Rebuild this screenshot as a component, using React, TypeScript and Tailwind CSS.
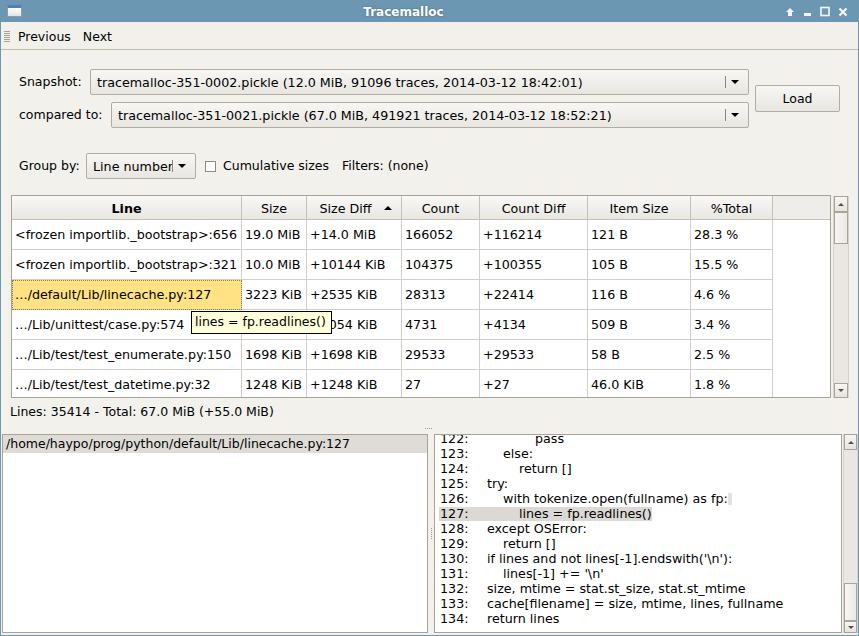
import React from "react";

const rows: string[][] = [
  ["<frozen importlib._bootstrap>:656", "19.0 MiB", "+14.0 MiB", "166052", "+116214", "121 B", "28.3 %"],
  ["<frozen importlib._bootstrap>:321", "10.0 MiB", "+10144 KiB", "104375", "+100355", "105 B", "15.5 %"],
  ["\u2026/default/Lib/linecache.py:127", "3223 KiB", "+2535 KiB", "28313", "+22414", "116 B", "4.6 %"],
  ["\u2026/Lib/unittest/case.py:574", "2188 KiB", "+2054 KiB", "4731", "+4134", "509 B", "3.4 %"],
  ["\u2026/Lib/test/test_enumerate.py:150", "1698 KiB", "+1698 KiB", "29533", "+29533", "58 B", "2.5 %"],
  ["\u2026/Lib/test/test_datetime.py:32", "1248 KiB", "+1248 KiB", "27", "+27", "46.0 KiB", "1.8 %"],
];

const widths = ["w-[230px]", "w-[65px]", "w-[95px]", "w-[78px]", "w-[108px]", "w-[103px]", "w-[82px]"];
const headers = ["Line", "Size", "Size Diff", "Count", "Count Diff", "Item Size", "%Total"];

const code: [string, number, string][] = [
  ["122:", 3, "pass"],
  ["123:", 1, "else:"],
  ["124:", 2, "return []"],
  ["125:", 0, "try:"],
  ["126:", 1, "with tokenize.open(fullname) as fp:"],
  ["127:", 2, "lines = fp.readlines()"],
  ["128:", 0, "except OSError:"],
  ["129:", 1, "return []"],
  ["130:", 0, "if lines and not lines[-1].endswith('\\n'):"],
  ["131:", 1, "lines[-1] += '\\n'"],
  ["132:", 0, "size, mtime = stat.st_size, stat.st_mtime"],
  ["133:", 0, "cache[filename] = size, mtime, lines, fullname"],
  ["134:", 0, "return lines"],
];

const indents = ["pl-[0px]", "pl-[16px]", "pl-[32px]", "pl-[48px]"];

function DownTri() {
  return <span className="w-0 h-0 border-l-[4px] border-r-[4px] border-t-[4px] border-l-transparent border-r-transparent border-t-black" />;
}

function Combo({ text, className }: { text: string; className: string }) {
  return (
    <div className={`flex items-center h-[26px] rounded-[2px] border border-[#b3ac9f] bg-linear-to-b from-[#f8f7f4] to-[#e8e6e0] ${className}`}>
      <span className="flex-1 overflow-hidden whitespace-nowrap pl-[6px] pt-px text-[12.7px]">{text}</span>
      <span className="w-px h-[12px] bg-[#8c867b]" />
      <span className="ml-[5px] mr-[9px] flex items-center">
        <DownTri />
      </span>
    </div>
  );
}

function ScrollBtn({ up, className }: { up: boolean; className?: string }) {
  return (
    <div className={`flex items-center justify-center border border-[#aaa498] bg-linear-to-b from-[#f7f6f3] to-[#e6e4df] ${className ?? ""}`}>
      {up ? (
        <span className="w-0 h-0 border-l-[3px] border-r-[3px] border-b-[3px] border-l-transparent border-r-transparent border-b-[#505050]" />
      ) : (
        <span className="w-0 h-0 border-l-[3px] border-r-[3px] border-t-[3px] border-l-transparent border-r-transparent border-t-[#505050]" />
      )}
    </div>
  );
}

export default function App() {
  return (
    <div className="relative w-[859px] h-[636px] bg-[#6c97b2] flex flex-col font-['DejaVu_Sans','Liberation_Sans',sans-serif] text-[12.5px] text-black overflow-hidden">
      {/* Title bar */}
      <div className="h-[22px] flex items-center shrink-0">
        <div className="w-[22px] h-full flex items-center">
          <div className="ml-[7px] w-[15px] h-[12px] border border-[#8e9aa6] border-t-[3px] border-t-[#4d7fc2] bg-linear-to-b from-[#ffffff] to-[#dfe3e8]" />
        </div>
        <div className="flex-1 text-center text-white font-bold text-[12px] pt-[2px] [text-shadow:0_0_2px_#3e6076]">Tracemalloc</div>
        <div className="w-[74px] h-full flex items-center">
          <svg width="74" height="22" viewBox="0 0 74 22">
            <path d="M5 8 L9 12 L7 12 L7 16 L3 16 L3 12 L1 12 Z" fill="#f4f7fa" />
            <rect x="19" y="13" width="7" height="3" fill="#f4f7fa" />
            <rect x="36" y="7.5" width="8" height="8" fill="none" stroke="#f4f7fa" strokeWidth="1.6" />
            <path d="M54.5 8.5 L61.5 15.5 M61.5 8.5 L54.5 15.5" stroke="#f4f7fa" strokeWidth="2.2" />
          </svg>
        </div>
      </div>

      {/* Body */}
      <div className="flex-1 mx-px mb-px bg-[#f2f1ec] flex flex-col">
        {/* Menubar */}
        <div className="h-[28px] shrink-0 flex items-center pt-[3px] border-b border-[#c4bcab] bg-[#f2f0eb]">
          <svg width="8" height="14" className="ml-[3px]" viewBox="0 0 8 14">
            {[1, 3, 5, 7, 9, 11].map((y) => (
              <line key={y} x1="0" y1={y + 0.5} x2="6" y2={y + 0.5} stroke="#a8a294" strokeWidth="1" />
            ))}
          </svg>
          <span className="ml-[6px]">Previous</span>
          <span className="ml-[12px]">Next</span>
        </div>

        {/* Snapshot section */}
        <div className="flex items-center pl-[18px] mt-[19px] shrink-0">
          <div className="w-[730px] flex flex-col gap-[7px]">
            <div className="flex items-center">
              <span className="w-[71px] pt-px">Snapshot:</span>
              <Combo className="flex-1" text="tracemalloc-351-0002.pickle (12.0 MiB, 91096 traces, 2014-03-12 18:42:01)" />
            </div>
            <div className="flex items-center">
              <span className="w-[92px] pt-px">compared to:</span>
              <Combo className="flex-1" text="tracemalloc-351-0021.pickle (67.0 MiB, 491921 traces, 2014-03-12 18:52:21)" />
            </div>
          </div>
          <div className="ml-[6px] w-[85px] h-[27px] flex items-center justify-center pt-px rounded-[2px] border border-[#b3ac9f] bg-linear-to-b from-[#f8f7f4] to-[#e8e6e0]">
            Load
          </div>
        </div>

        {/* Group by row */}
        <div className="flex items-center pl-[18px] mt-[25px] h-[26px] shrink-0">
          <span className="w-[67px] pt-px">Group by:</span>
          <Combo className="w-[110px]" text="Line number" />
          <span className="ml-[9px] w-[11px] h-[11px] border border-[#8f897e] bg-white" />
          <span className="ml-[7px] w-[119px] pt-px">Cumulative sizes</span>
          <span className="pt-px">Filters: (none)</span>
        </div>

        {/* Table */}
        <div className="flex mt-[16px] ml-[10px] shrink-0 text-[12.7px]">
          <div className="w-[820px] h-[203px] border border-[#a9a397] bg-white overflow-hidden">
            <div className="flex h-[24px] border-b border-[#c5c0b6] bg-[#efede9]">
              {headers.map((h, i) => (
                <div
                  key={h}
                  className={`${widths[i]} h-full flex items-center pt-[3px] border-r border-[#c5c0b6] bg-linear-to-b from-[#f9f8f6] to-[#e9e7e2] ${i === 0 ? "font-bold" : ""}`}
                >
                  <span className="flex-1 text-center">{h}</span>
                  {i === 2 && (
                    <span className="mr-[9px] mb-[3px] w-0 h-0 border-l-[4px] border-r-[4px] border-b-[4px] border-l-transparent border-r-transparent border-b-black" />
                  )}
                </div>
              ))}
            </div>
            {rows.map((r, ri) => (
              <div key={ri} className="flex h-[30px]">
                {r.map((c, ci) => (
                  <div
                    key={ci}
                    className={`${widths[ci]} h-full flex items-center pl-[3px] whitespace-nowrap overflow-hidden border-r border-b border-[#d2cfca] ${
                      ri === 2 && ci === 0 ? "bg-[#fee283] outline-1 outline-dotted outline-[#8d7d43] outline-offset-[-1px]" : ""
                    }`}
                  >
                    {c}
                  </div>
                ))}
              </div>
            ))}
          </div>
          <div className="ml-[2px] mt-px w-[16px] h-[202px] flex flex-col bg-[#e9e7e2] border-x border-[#d6d2cb]">
            <ScrollBtn up className="h-[16px]" />
            <div className="h-[32px] border border-[#aaa498] bg-linear-to-r from-[#f7f6f3] to-[#ebe9e4]" />
            <div className="flex-1" />
            <ScrollBtn up={false} className="h-[15px]" />
          </div>
        </div>

        {/* Status */}
        <div className="h-[29px] flex items-center pl-[9px] shrink-0">Lines: 35414 - Total: 67.0 MiB (+55.0 MiB)</div>
        <div className="h-[7px] shrink-0 flex justify-center">
          <span className="mt-[1px] ml-[-2px] w-[7px] border-t border-dotted border-[#a39d91]" />
        </div>

        {/* Bottom panes */}
        <div className="flex h-[199px] ml-px shrink-0">
          <div className="w-[426px] h-full border border-[#a9a397] bg-white">
            <div className="h-[18px] bg-[#dfdcd7] flex items-center pl-[3px] whitespace-nowrap">/home/haypo/prog/python/default/Lib/linecache.py:127</div>
          </div>
          <div className="w-[6px] h-full flex items-center justify-center">
            <span className="h-[11px] border-l border-dotted border-[#a39d91]" />
          </div>
          <div className="w-[408px] h-full border border-[#a9a397] bg-white overflow-hidden text-[12.7px]">
            <div className="mt-[-4px] pl-[4px] leading-[15px]">
              {code.map(([n, ind, t]) => (
                <div key={n} className="flex h-[15px] items-center">
                  <div className={`flex items-center h-[14px] ${n === "127:" ? "bg-[#dcd9d4]" : ""}`}>
                    <span className="w-[48px] pl-px">{n}</span>
                    <span className={`${indents[ind]} whitespace-pre`}>{t}</span>
                  </div>
                  {n === "126:" && <span className="w-[4px] h-[12px] bg-[#e4e2de]" />}
                </div>
              ))}
            </div>
          </div>
          <div className="ml-px w-[15px] h-full flex flex-col bg-[#e9e7e2] border-x border-[#d6d2cb]">
            <ScrollBtn up className="h-[16px]" />
            <div className="flex-1" />
            <div className="h-[38px] border border-[#aaa498] bg-linear-to-r from-[#f7f6f3] to-[#ebe9e4]" />
            <ScrollBtn up={false} className="h-[12px]" />
          </div>
        </div>
      </div>

      {/* Tooltip */}
      <div className="absolute left-[191px] top-[311px] w-[141px] h-[23px] border border-black bg-[#ffffdc] flex items-center pl-[3px] whitespace-nowrap">
        lines = fp.readlines()
      </div>
    </div>
  );
}
